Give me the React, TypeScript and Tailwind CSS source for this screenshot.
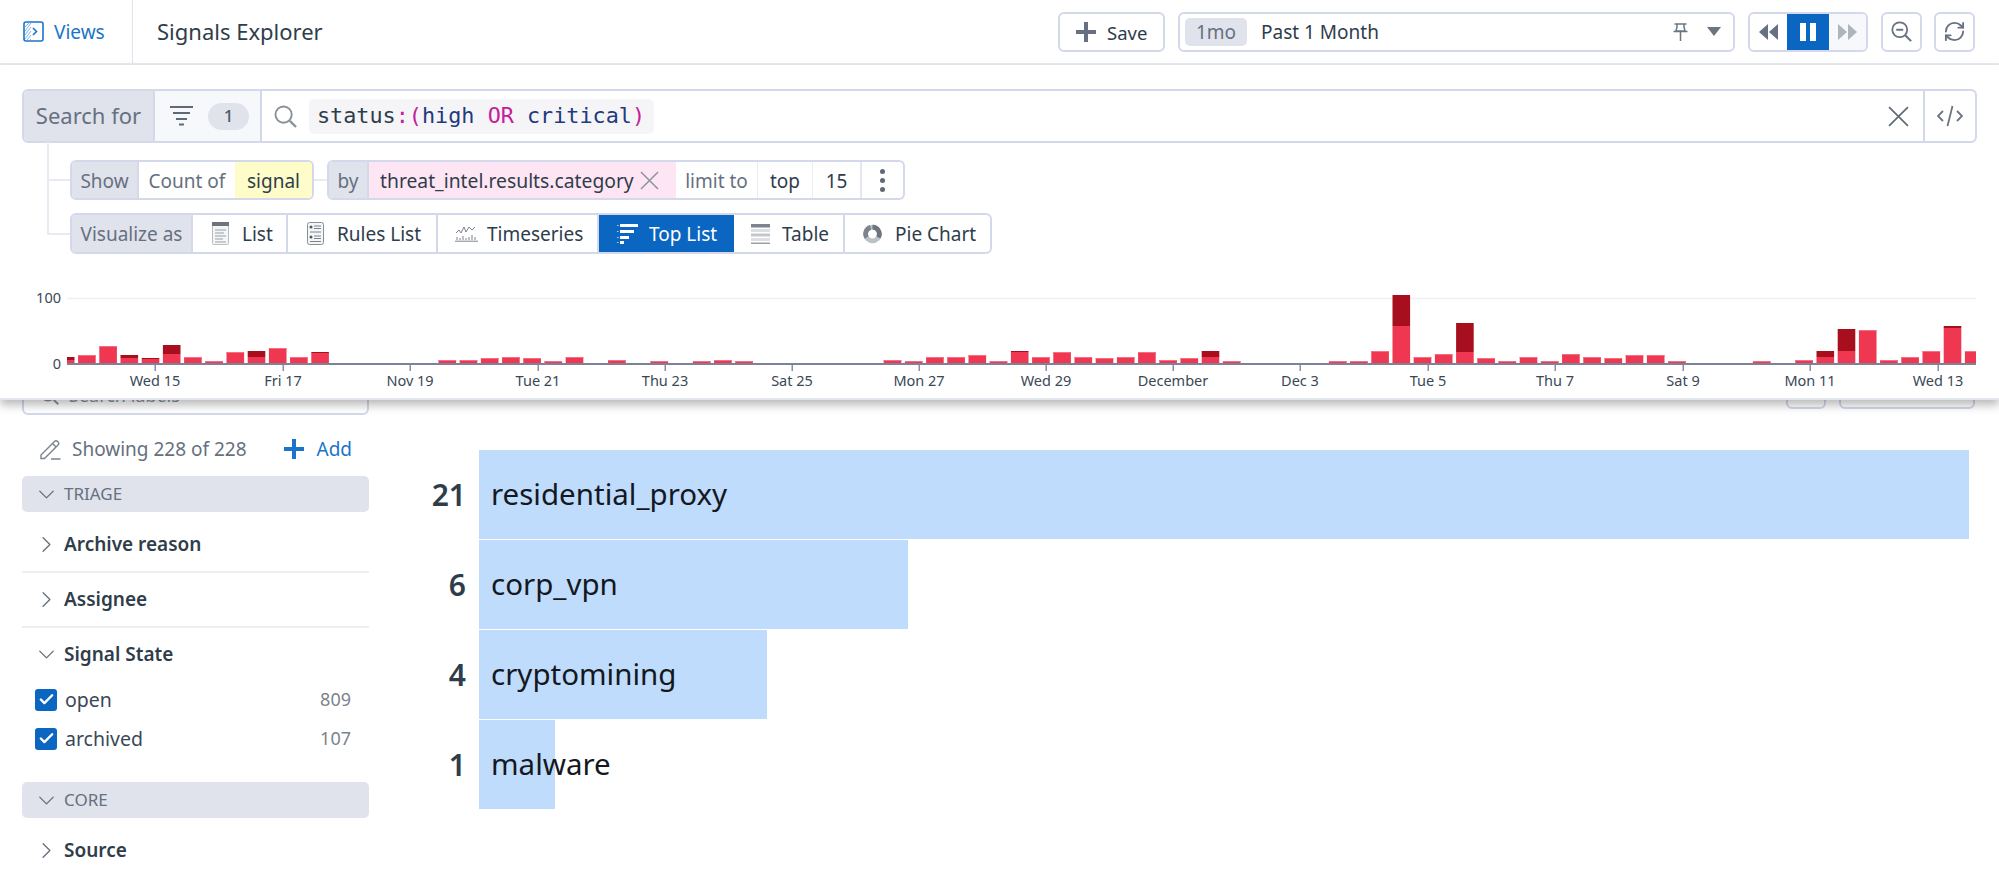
import React from "react";
import { ChevronDown, ChevronRight, Check, RefreshCw } from "lucide-react";

type Bar = [number, number, number?]; // index, light height, dark height
const bars: Bar[] = [
  [0, 3, 3], [1, 8], [2, 17], [3, 5, 3], [4, 4, 1], [5, 9, 9], [6, 6], [7, 2], [8, 11], [9, 6, 6], [10, 15], [11, 6], [12, 10, 1],
  [18, 3], [19, 3], [20, 5], [21, 6], [22, 5], [23, 2], [24, 6], [26, 3], [28, 2], [30, 2], [31, 3], [32, 2],
  [39, 3], [40, 2], [41, 6], [42, 6], [43, 8], [44, 2], [45, 11, 1], [46, 6], [47, 11], [48, 6], [49, 5], [50, 6], [51, 11], [52, 3], [53, 5], [54, 6, 6], [55, 2],
  [60, 2], [61, 2], [62, 12], [63, 37, 31], [64, 6], [65, 9], [66, 11, 29], [67, 5], [68, 2], [69, 6], [70, 2], [71, 9], [72, 6], [73, 5], [74, 8], [75, 8], [76, 2],
  [80, 2], [82, 3], [83, 6, 6], [84, 12, 22], [85, 33], [86, 3], [87, 6], [88, 12], [89, 35, 2], [90, 12],
];

const ticks: [number, string][] = [
  [155, "Wed 15"], [283, "Fri 17"], [410, "Nov 19"], [538, "Tue 21"], [665, "Thu 23"], [792, "Sat 25"], [919, "Mon 27"],
  [1046, "Wed 29"], [1173, "December"], [1300, "Dec 3"], [1428, "Tue 5"], [1555, "Thu 7"], [1683, "Sat 9"], [1810, "Mon 11"], [1938, "Wed 13"],
];

function Histogram() {
  const base = 363;
  return (
    <svg width="1999" height="145" viewBox="0 254 1999 145" className="block" fontFamily="'Noto Sans', sans-serif">
      <line x1="67" x2="1976" y1="298.5" y2="298.5" stroke="#eff0f4" strokeWidth="1.5" />
      <text x="61" y="303" textAnchor="end" fontSize="14.5" fill="#3a4856">100</text>
      <text x="61" y="369" textAnchor="end" fontSize="14.5" fill="#3a4856">0</text>
      {bars.map(([i, light, dark]) => {
        const left = 78.1 + 21.2 * (i - 1);
        const x = Math.max(left, 67);
        const right = Math.min(left + 17.6, 1976);
        const w = right - x;
        const d = dark ?? 0;
        return (
          <g key={i}>
            <rect x={x} y={base - light} width={w} height={light} fill="#ef3751" />
            {d > 0 ? (
              <rect x={x} y={base - light - d} width={w} height={d} fill="#a70f1f" />
            ) : (
              <rect x={x} y={base - light} width={w} height={1} fill="#f6707f" />
            )}
          </g>
        );
      })}
      <rect x="67" y="363" width="1909" height="2" fill="#7d8199" />
      {ticks.map(([x, label]) => (
        <g key={label}>
          <rect x={x - 0.5} y="365" width="1.5" height="6" fill="#8a8ea6" />
          <text x={x} y="386" textAnchor="middle" fontSize="14.5" fill="#3a4856">{label}</text>
        </g>
      ))}
    </svg>
  );
}

const ViewsIcon = () => (
  <svg width="21" height="21" viewBox="0 0 21 21" fill="none">
    <g stroke="#7fb2e6" strokeWidth="1">
      <path d="M2 6 6 2M2 10l6-8M2 14 8 6M2 18 8 10M4 19l4-5M7 19l1-1" />
    </g>
    <rect x="1" y="1" width="19" height="19" rx="2" stroke="#1b74c9" strokeWidth="1.6" />
    <path d="M10 7l3.5 3.5L10 14" stroke="#1b74c9" strokeWidth="1.6" />
  </svg>
);

const ThickPlus = ({ color }: { color: string }) => (
  <svg width="20" height="20" viewBox="0 0 20 20" fill={color}>
    <rect x="8" y="0" width="4" height="20" />
    <rect x="0" y="8" width="20" height="4" />
  </svg>
);

const PencilIcon = () => (
  <svg width="21" height="21" viewBox="0 0 21 21" fill="none" stroke="#7b838c" strokeWidth="1.4">
    <path d="M1 16 14.5 2.5a2.2 2.2 0 0 1 3.1 0l.4.4a2.2 2.2 0 0 1 0 3.1L4.5 19.5H1zM12.5 4.5 16 8M11 20h9.5" />
  </svg>
);

const FilterIcon = () => (
  <svg width="23" height="20" viewBox="0 0 23 20" fill="#5f6a76">
    <rect x="0" y="0" width="23" height="2" />
    <rect x="3" y="6" width="17" height="2" />
    <rect x="6" y="12" width="11" height="2" />
    <rect x="9" y="17.5" width="5" height="2" />
  </svg>
);

const SearchIcon = ({ size = 24, color = "#8b9199", minus = false }: { size?: number; color?: string; minus?: boolean }) => (
  <svg width={size} height={size} viewBox="0 0 24 24" fill="none" stroke={color} strokeWidth="2">
    <circle cx="10" cy="10" r="8.5" />
    <path d="M16.5 16.5 23 23" strokeWidth="2.4" />
    {minus && <path d="M6 10h8" strokeWidth="2.2" />}
  </svg>
);

const XIcon = ({ size, color }: { size: number; color: string }) => (
  <svg width={size} height={size} viewBox="0 0 20 20" fill="none" stroke={color} strokeWidth="1.6">
    <path d="M1 1l18 18M19 1 1 19" />
  </svg>
);

const CodeIcon = () => (
  <svg width="26" height="22" viewBox="0 0 26 22" fill="none" stroke="#6b7580" strokeWidth="1.8">
    <path d="M6 6 1 11l5 5M20 6l5 5-5 5M15.5 1l-5 20" />
  </svg>
);

const PinIcon = () => (
  <svg width="15" height="18" viewBox="0 0 15 18" fill="none" stroke="#6b7580" strokeWidth="1.5">
    <path d="M1.5 1h12M4 1v3l-1 4h9l-1-4V1M0.5 8.5h14M7.5 9v9" />
  </svg>
);

const Caret = () => (
  <svg width="14" height="9" viewBox="0 0 14 9" fill="#6b7580"><path d="M0 0h14L7 9z" /></svg>
);

const Rewind = () => (
  <svg width="19" height="16" viewBox="0 0 19 16" fill="#667080"><path d="M9 0v16L0 8zM19 0v16l-9-8z" /></svg>
);
const Forward = () => (
  <svg width="19" height="16" viewBox="0 0 19 16" fill="#aeb4bb"><path d="M0 0v16l9-8zM10 0v16l9-8z" /></svg>
);
const Pause = () => (
  <svg width="16" height="18" viewBox="0 0 16 18" fill="#fff"><rect width="6" height="18" /><rect x="10" width="6" height="18" /></svg>
);

const ListIcon = () => (
  <svg width="17" height="23" viewBox="0 0 17 23" fill="none">
    <rect x="0.5" y="0.5" width="16" height="22" rx="1" fill="#f4f5f7" stroke="#b9bec6" />
    <rect x="0" y="0" width="17" height="4" fill="#6d747d" />
    <path d="M3 8h11M3 11h9M3 14h11M3 17h8M3 20h11" stroke="#9aa0a9" />
  </svg>
);
const RulesIcon = () => (
  <svg width="17" height="23" viewBox="0 0 17 23" fill="none">
    <rect x="0.5" y="0.5" width="16" height="22" rx="2" fill="#f4f5f7" stroke="#8a9099" />
    <circle cx="4" cy="5" r="1.5" fill="#4f5760" />
    <circle cx="4" cy="15" r="1.5" fill="#4f5760" />
    <path d="M7 4h7M7 6.5h7M3 10h11M7 14h7M7 16.5h7M3 19.5h11" stroke="#7d848d" />
  </svg>
);
const TimeseriesIcon = () => (
  <svg width="23" height="17" viewBox="0 0 23 17" fill="none">
    <path d="M1 8l3-3 2 3 3-6 2 5 3-5 3 3 3-3" stroke="#7d848d" />
    <path d="M2 15v-3M5 15v-2M8 15v-4M11 15v-2M14 15v-3M17 15v-5M20 15v-3" stroke="#aab0b8" strokeWidth="1.6" />
    <path d="M0 16.2h23" stroke="#7d848d" />
  </svg>
);
const TopListIcon = () => (
  <svg width="21" height="20" viewBox="0 0 21 20" fill="#fff">
    <rect x="3" y="0" width="18" height="3" />
    <rect x="3" y="6" width="14" height="3" />
    <rect x="3" y="12" width="9" height="3" />
    <rect x="3" y="17" width="4" height="3" />
    <path d="M0 1h1.5v1H0zM0 7h1.5v1H0zM0 13h1.5v1H0zM0 18h1.5v1H0z" opacity=".7" />
  </svg>
);
const TableIcon = () => (
  <svg width="19" height="20" viewBox="0 0 19 20" fill="none">
    <rect x="0" y="0" width="19" height="3.5" fill="#7d848d" />
    <rect x="0" y="5" width="19" height="3" fill="#dcdfe3" />
    <rect x="0" y="9.5" width="19" height="3" fill="#c3c7cd" />
    <rect x="0" y="14" width="19" height="3" fill="#dcdfe3" />
    <rect x="0" y="18.5" width="19" height="1.5" fill="#9aa0a8" />
  </svg>
);
const PieIcon = () => (
  <svg width="19" height="20" viewBox="0 0 20 20" fill="none" strokeWidth="5">
    <circle cx="10" cy="10" r="7.2" stroke="#bcc0c7" />
    <path d="M10 2.8a7.2 7.2 0 0 1 6.2 10.8" stroke="#6d747d" />
    <path d="M3.8 13.7A7.2 7.2 0 0 1 8 3" stroke="#7d848d" />
  </svg>
);

function Viz({ cls, gap, icon, label, active }: { cls: string; gap: string; icon: React.ReactNode; label: string; active?: boolean }) {
  return (
    <div className={`flex h-full items-center ${gap} ${cls} ${active ? "bg-[#0b66c2] text-white" : "border-r-2 border-[#d3d8ea] text-[#2f3d4b]"}`}>
      <span className="flex shrink-0">{icon}</span>
      <span className="pt-[2px]">{label}</span>
    </div>
  );
}

function Facet({ label, open }: { label: string; open?: boolean }) {
  return (
    <div className="flex h-[53px] items-center text-[19px] font-semibold text-[#2f3d4b]">
      <span className="flex w-[42px] justify-center pl-[6px] text-[#667080]">
        {open ? <ChevronDown size={27} strokeWidth={1.2} /> : <ChevronRight size={27} strokeWidth={1.2} />}
      </span>
      <span>{label}</span>
    </div>
  );
}

function Band({ label }: { label: string }) {
  return (
    <div className="flex h-[36px] items-center rounded-[5px] bg-[#e0e3ec] text-[17px] text-[#667080]">
      <span className="flex w-[42px] justify-center pl-[6px]"><ChevronDown size={27} strokeWidth={1.2} /></span>
      <span>{label}</span>
    </div>
  );
}

function CheckRow({ label, count }: { label: string; count: string }) {
  return (
    <div className="flex h-[39px] items-center pl-[13px] pr-[18px] text-[19.5px] text-[#3a4856]">
      <span className="flex h-[22px] w-[22px] items-center justify-center rounded-[3px] bg-[#0b66c2] text-white">
        <Check size={17} strokeWidth={3.4} />
      </span>
      <span className="ml-[8px]">{label}</span>
      <span className="ml-auto text-[18px] text-[#7b838c]">{count}</span>
    </div>
  );
}

const rows = [
  { n: "21", label: "residential_proxy", cls: "w-[1490px]" },
  { n: "6", label: "corp_vpn", cls: "w-[429px]" },
  { n: "4", label: "cryptomining", cls: "w-[288px]" },
  { n: "1", label: "malware", cls: "w-[76px]" },
];

export default function App() {
  return (
    <div className="flex h-[875px] w-full flex-col overflow-hidden bg-white font-['Noto_Sans',sans-serif] text-[#2f3d4b]">
      <header className="flex h-[65px] shrink-0 items-center border-b-2 border-[#e8ebf3]">
        <div className="flex h-full w-[133px] items-center gap-[10px] border-r border-[#e0e3ec] pl-[23px] text-[19px] text-[#1b74c9]">
          <ViewsIcon />
          <span className="pt-[2px]">Views</span>
        </div>
        <div className="ml-[24px] text-[22px]">Signals Explorer</div>
        <div className="ml-auto flex items-center pr-[24px] text-[19px]">
          <button className="flex h-[40px] w-[107px] items-center gap-[11px] rounded-[6px] border-2 border-[#d3d8ea] pl-[16px]">
            <ThickPlus color="#667080" />
            <span className="pt-[2px] text-[18.5px]">Save</span>
          </button>
          <div className="ml-[13px] flex h-[40px] w-[557px] items-center rounded-[6px] border-2 border-[#d3d8ea] pl-[5px] pr-[12px]">
            <span className="flex h-[28px] w-[62px] items-center justify-center rounded-[5px] bg-[#e0e3ec] pt-[1px] text-[#667080]">1mo</span>
            <span className="ml-[14px] pt-[2px]">Past 1 Month</span>
            <span className="ml-auto flex"><PinIcon /></span>
            <span className="ml-[19px] flex"><Caret /></span>
          </div>
          <div className="ml-[13px] flex h-[40px] w-[120px] overflow-hidden rounded-[6px] border-2 border-[#d3d8ea]">
            <span className="flex w-[38px] items-center justify-center"><Rewind /></span>
            <span className="-my-[2px] flex w-[42px] items-center justify-center bg-[#0b66c2]"><Pause /></span>
            <span className="flex w-[38px] items-center justify-center bg-[#f7f8fb]"><Forward /></span>
          </div>
          <span className="ml-[13px] flex h-[40px] w-[41px] items-center justify-center rounded-[6px] border-2 border-[#d3d8ea]">
            <SearchIcon size={21} color="#667080" minus />
          </span>
          <span className="ml-[12px] flex h-[40px] w-[41px] items-center justify-center rounded-[6px] border-2 border-[#d3d8ea] text-[#667080]">
            <RefreshCw size={23} strokeWidth={1.9} />
          </span>
        </div>
      </header>

      <section className="relative z-10 h-[335px] shrink-0 border-b-2 border-[#e4e6ef] bg-white shadow-[0_5px_9px_rgba(0,0,0,0.28)]">
        <div className="mx-[22px] mt-[24px] flex h-[54px] overflow-hidden rounded-[6px] border-2 border-[#d3d8ea] text-[22px]">
          <div className="flex w-[131px] items-center justify-center border-r-2 border-[#d3d8ea] bg-[#e0e3ec] pb-[2px] text-[#667080]">Search for</div>
          <div className="flex w-[107px] items-center border-r-2 border-[#d3d8ea] bg-[#f7f8fb] pl-[15px]">
            <FilterIcon />
            <span className="ml-[15px] flex h-[27px] w-[41px] items-center justify-center rounded-full bg-[#e0e3ec] text-[17px] font-medium text-[#4f5a66]">1</span>
          </div>
          <div className="flex flex-1 items-center pl-[12px]">
            <SearchIcon size={23} />
            <span className="ml-[12px] flex h-[35px] w-[345px] items-center rounded-[5px] bg-[#f5f5f7] pl-[8px] font-['DejaVu_Sans_Mono',monospace] text-[21.8px] whitespace-pre">
              <span className="text-[#2f3d4b]">status</span>
              <span className="text-[#c4209a]">:(</span>
              <span className="text-[#1f3a7d]">high </span>
              <span className="text-[#c4209a]">OR </span>
              <span className="text-[#1f3a7d]">critical</span>
              <span className="text-[#c4209a]">)</span>
            </span>
            <span className="ml-auto mr-[14px] flex"><XIcon size={21} color="#5f6a76" /></span>
          </div>
          <div className="flex w-[52px] items-center justify-center border-l-2 border-[#d3d8ea]"><CodeIcon /></div>
        </div>

        <div className="absolute left-[47px] top-[77px] h-[93px] w-[2px] bg-[#e8ebf3]" />

        <div className="mt-[17px] flex h-[40px] items-center pl-[49px] text-[19px]">
          <div className="h-[2px] w-[21px] bg-[#e8ebf3]" />
          <div className="flex h-full w-[244px] overflow-hidden rounded-[6px] border-2 border-[#d3d8ea]">
            <span className="flex w-[67px] items-center justify-center border-r-2 border-[#d3d8ea] bg-[#e0e3ec] pt-[2px] text-[#667080]">Show</span>
            <span className="flex w-[96px] items-center justify-center pt-[2px] text-[#667080]">Count of</span>
            <span className="flex flex-1 items-center justify-center bg-[#fefdc9] pt-[2px] text-[#2f3d4b]">signal</span>
          </div>
          <div className="h-[2px] w-[13px] bg-[#e8ebf3]" />
          <div className="flex h-full w-[578px] overflow-hidden rounded-[6px] border-2 border-[#d3d8ea]">
            <span className="flex w-[40px] items-center justify-center border-r-2 border-[#d3d8ea] bg-[#e0e3ec] pt-[2px] text-[#667080]">by</span>
            <span className="flex w-[307px] items-center gap-[6px] bg-[#fee5f4] pl-[11px] text-[19.3px]">
              <span className="pt-[2px]">threat_intel.results.category</span>
              <XIcon size={19} color="#8d94a0" />
            </span>
            <span className="flex w-[82px] items-center justify-center border-r border-[#eceef5] pt-[2px] text-[#667080]">limit to</span>
            <span className="flex w-[55px] items-center justify-center border-r border-[#eceef5] pt-[2px]">top</span>
            <span className="flex w-[49px] items-center justify-center border-r-2 border-[#e4e7f1] pt-[2px]">15</span>
            <span className="flex flex-1 flex-col items-center justify-center gap-[4px]">
              <i className="h-[5px] w-[5px] rounded-full bg-[#5f6a76]" />
              <i className="h-[5px] w-[5px] rounded-full bg-[#5f6a76]" />
              <i className="h-[5px] w-[5px] rounded-full bg-[#5f6a76]" />
            </span>
          </div>
        </div>

        <div className="mt-[13px] flex h-[41px] items-center pl-[49px] text-[19px]">
          <div className="h-[2px] w-[21px] bg-[#e8ebf3]" />
          <div className="flex h-full w-[922px] overflow-hidden rounded-[6px] border-2 border-[#d3d8ea]">
            <span className="flex w-[121px] items-center justify-center border-r-2 border-[#d3d8ea] bg-[#e0e3ec] pt-[2px] text-[#667080]">Visualize as</span>
            <Viz cls="w-[95px] pl-[19px]" gap="gap-[13px]" icon={<ListIcon />} label="List" />
            <Viz cls="w-[150px] pl-[19px]" gap="gap-[13px]" icon={<RulesIcon />} label="Rules List" />
            <Viz cls="w-[161px] pl-[17px]" gap="gap-[9px]" icon={<TimeseriesIcon />} label="Timeseries" />
            <Viz cls="w-[135px] pl-[18px]" gap="gap-[11px]" icon={<TopListIcon />} label="Top List" active />
            <Viz cls="w-[111px] pl-[17px]" gap="gap-[12px]" icon={<TableIcon />} label="Table" />
            <div className="flex h-full flex-1 items-center gap-[13px] pl-[18px]"><PieIcon /><span className="pt-[2px]">Pie Chart</span></div>
          </div>
        </div>

        <Histogram />
      </section>

      <main className="flex min-h-0 flex-1">
        <aside className="ml-[22px] w-[347px] shrink-0">
          <div className="-mt-[25px] flex h-[40px] items-center gap-[10px] rounded-[6px] border-2 border-[#d3d8ea] pl-[16px] text-[18px] text-[#8b9199]">
            <SearchIcon size={19} />
            <span>Search labels</span>
          </div>
          <div className="mb-[14px] mt-[21px] flex h-[26px] items-center pl-[18px] pr-[17px] text-[19px] text-[#667080]">
            <PencilIcon />
            <span className="ml-[11px]">Showing 228 of 228</span>
            <span className="ml-auto flex items-center gap-[12px] text-[#1b74c9]">
              <ThickPlus color="#1b74c9" />
              Add
            </span>
          </div>
          <Band label="TRIAGE" />
          <div className="mt-[6px] border-b-2 border-[#eceef4]"><Facet label="Archive reason" /></div>
          <div className="border-b-2 border-[#eceef4]"><Facet label="Assignee" /></div>
          <Facet label="Signal State" open />
          <div className="-mt-[1px]">
            <CheckRow label="open" count="809" />
            <CheckRow label="archived" count="107" />
          </div>
          <div className="mt-[24px]"><Band label="CORE" /></div>
          <div className="mt-[6px]"><Facet label="Source" /></div>
        </aside>

        <div className="min-w-0 flex-1 pl-[2px]">
          <div className="-mt-[31px] flex h-[40px] justify-end gap-[13px] pr-[24px]">
            <div className="w-[40px] rounded-[6px] border-2 border-[#d3d8ea]" />
            <div className="w-[136px] rounded-[6px] border-2 border-[#d3d8ea]" />
          </div>
          <div className="mt-[41px] flex flex-col gap-[1px]">
            {rows.map((r) => (
              <div key={r.label} className="flex h-[89px] items-center">
                <span className="w-[95px] shrink-0 text-right text-[30px] font-semibold text-[#2f3d4b]">{r.n}</span>
                <div className="relative ml-[13px] flex h-full w-[1490px] items-center">
                  <div className={`absolute inset-y-0 left-0 bg-[#c0dcfc] ${r.cls}`} />
                  <span className="relative pl-[12px] text-[29.5px] text-[#14181f]">{r.label}</span>
                </div>
              </div>
            ))}
          </div>
        </div>
      </main>
    </div>
  );
}
